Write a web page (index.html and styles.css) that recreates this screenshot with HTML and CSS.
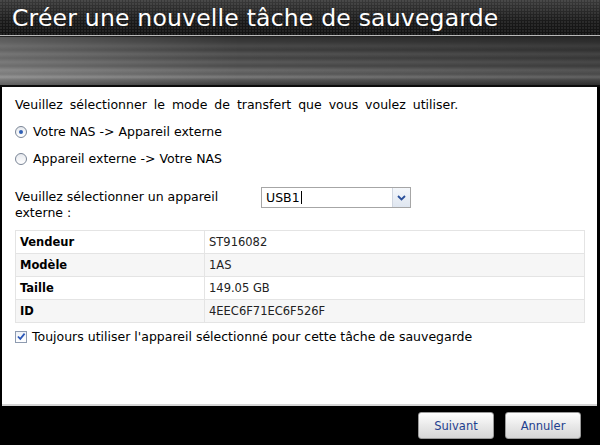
FILE: index.html
```html
<!DOCTYPE html>
<html lang="fr">
<head>
<meta charset="utf-8">
<link rel="stylesheet" href="styles.css">
</head>
<body>
<div class="dialog">
  <div class="titlebar"><h1 class="title">Créer une nouvelle tâche de sauvegarde</h1></div>
  <div class="metal"></div>
  <div class="content">
    <p class="intro">Veuillez sélectionner le mode de transfert que vous voulez utiliser.</p>
    <label class="opt"><span class="radio checked"></span>Votre NAS -&gt; Appareil externe</label>
    <label class="opt"><span class="radio"></span>Appareil externe -&gt; Votre NAS</label>
    <div class="devrow">
      <div class="devlabel">Veuillez sélectionner un appareil externe :</div>
      <div class="select"><span class="val">USB1<span class="caret"></span></span><span class="arrow"><svg width="9" height="6" viewBox="0 0 9 6"><path d="M1 1 L4.5 4.5 L8 1" fill="none" stroke="#2a4f9a" stroke-width="1.8"/></svg></span></div>
    </div>
    <table class="info">
      <tr><th>Vendeur</th><td>ST916082</td></tr>
      <tr class="alt"><th>Modèle</th><td>1AS</td></tr>
      <tr><th>Taille</th><td>149.05 GB</td></tr>
      <tr class="alt"><th>ID</th><td>4EEC6F71EC6F526F</td></tr>
    </table>
    <label class="chk"><span class="box"><svg width="11" height="11" viewBox="0 0 11 11"><path d="M2 5.5 L4.5 8 L9 2.5" fill="none" stroke="#2b57b8" stroke-width="1.8"/></svg></span>Toujours utiliser l'appareil sélectionné pour cette tâche de sauvegarde</label>
  </div>
  <div class="footer">
    <button class="btn">Suivant</button>
    <button class="btn">Annuler</button>
  </div>
</div>
</body>
</html>
```
FILE: styles.css
```css
html, body { margin: 0; padding: 0; }
body { width: 600px; height: 445px; background: #000; overflow: hidden; }
.dialog { width: 600px; height: 445px; display: flex; flex-direction: column; background: #000; }
.titlebar {
  height: 35px;
  background:
    radial-gradient(circle at 1px 1px, rgba(255,255,255,0.08) 1px, transparent 1.2px) 0 0 / 3px 3px,
    linear-gradient(#3a3a3a, #1a1a1a 60%, #111);
  border-bottom: 1px solid #b8b8b8;
  display: flex; align-items: center;
  padding-left: 12px;
}
.title {
  margin: 0; font-family: "DejaVu Sans", sans-serif; font-weight: normal;
  font-size: 23.5px; color: #fff; letter-spacing: 0.2px;
}
.metal {
  height: 49px;
  border-bottom: 2px solid #0c0c0c;
  background-color: #444;
  background-image:
    linear-gradient(90deg, rgba(255,255,255,0.2), rgba(255,255,255,0) 40%, rgba(0,0,0,0.2) 100%),
    linear-gradient(180deg, #2e2e2e 0, #3a3a3a 6px, #4a4a4a 10px, #3d3d3d 14px, #555 18px, #444 22px, #5a5a5a 26px, #4a4a4a 30px, #6a6a6a 34px, #5b5b5b 38px, #7a7a7a 41px, #555 44px, #3a3a3a 49px);
  box-shadow: inset 0 1px 0 #222;
}
.content {
  flex: 1;
  background: #fff;
  margin: 0 3px 0 2px;
  border-bottom: 2px solid #d4d4d4;
  padding: 10px 13px 0 13px;
  font-family: "DejaVu Sans", Verdana, sans-serif;
  font-size: 12.5px;
  color: #000;
}
.intro { margin: 0; line-height: 15px; word-spacing: 3px; }
.opt { display: flex; align-items: center; height: 15px; margin-top: 12px; }
.radio {
  width: 12px; height: 12px; border-radius: 50%;
  border: 1px solid #7a8596; background: linear-gradient(#e6e9ee, #fff);
  box-sizing: border-box; margin-right: 6px; position: relative;
}
.radio.checked::after {
  content: ""; position: absolute; left: 3px; top: 3px; width: 4px; height: 4px; border-radius: 50%;
  background: #2f5fb4;
}
.devrow { display: flex; margin-top: 21px; align-items: flex-start; }
.devlabel { width: 246px; line-height: 16px; margin-top: 2px; }
.select {
  width: 150px; height: 21px; box-sizing: border-box;
  border: 1px solid #a6a6a6; display: flex;
}
.val { flex: 1; padding-left: 4px; line-height: 19px; font-size: 12.5px; }
.caret { display: inline-block; width: 1px; height: 13px; background: #000; vertical-align: -2px; margin-left: 1px; }
.arrow {
  width: 17px; display: flex; align-items: center; justify-content: center;
  border-left: 1px solid #d0d6e0;
  background: linear-gradient(#f4f7fb, #dfe6f0);
}
.info {
  margin-top: 9px; width: 570px; border-collapse: collapse;
  border: 1px solid #cfcfcf;
}
.info th, .info td {
  height: 22px; padding: 0 0 0 4px; text-align: left; border: 1px solid #e4e4e4;
  font-size: 11.5px;
}
.info th { width: 184px; font-weight: bold; }
.info td { color: #222; }
.info tr.alt th, .info tr.alt td { background: #f6f6f6; }
.chk { display: flex; align-items: center; height: 15px; margin-top: 6px; }
.box {
  width: 12px; height: 12px; box-sizing: border-box; border: 1px solid #8e9bb0;
  background: linear-gradient(#eef2f8, #fff); margin-right: 5px; display: flex;
}
.box svg { margin: -0.5px 0 0 -0.5px; }
.footer {
  height: 39px; background: #000; display: flex; justify-content: flex-end; align-items: center;
  gap: 11px; padding-right: 19px;
}
.btn {
  width: 76px; height: 27px; border-radius: 3px; border: 1px solid #9a9a9a;
  background: linear-gradient(#ffffff, #e9e9e9 50%, #d6d6d6);
  font-family: "DejaVu Sans", Verdana, sans-serif; font-size: 11.5px; color: #1f3f8f;
  padding: 0;
}
```
